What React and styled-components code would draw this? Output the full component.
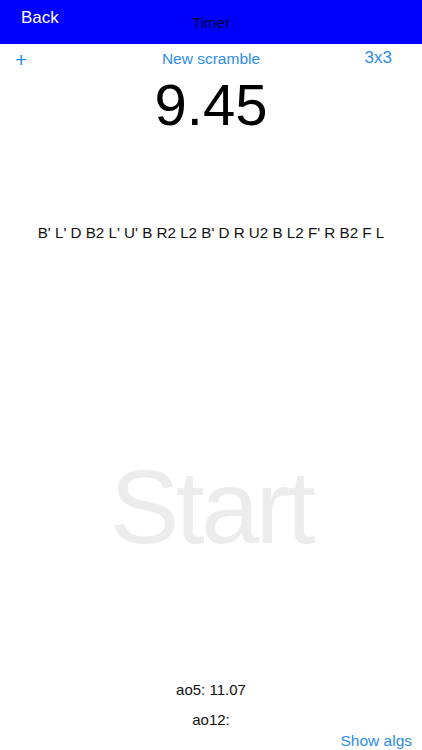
import styled, { createGlobalStyle } from "styled-components";

const GlobalStyle = createGlobalStyle`
  html, body {
    margin: 0;
    padding: 0;
    background: #ffffff;
  }
  body {
    font-family: "Liberation Sans", Arial, sans-serif;
  }
`;

const Screen = styled.div`
  width: 422px;
  height: 750px;
  display: flex;
  flex-direction: column;
  overflow: hidden;
  background: #ffffff;
`;

const NavBar = styled.div`
  height: 44px;
  background-color: #0000ff;
  display: grid;
  grid-template-columns: 1fr auto 1fr;
  align-items: center;
`;

const BackButton = styled.div`
  color: #ffffff;
  font-size: 17px;
  padding-left: 21px;
  margin-top: -8px;
`;

const NavTitle = styled.div`
  color: #000033;
  font-size: 15px;
`;

const ToolRow = styled.div`
  display: grid;
  grid-template-columns: 1fr auto 1fr;
  align-items: center;
  height: 30px;
`;

const LinkText = styled.div`
  color: #2d8ce8;
  font-size: ${(p) => p.size || 15}px;
  text-align: ${(p) => p.align || "center"};
  padding: ${(p) => p.pad || "0"};
  margin-top: ${(p) => p.shift || 0}px;
`;

const Time = styled.div`
  text-align: center;
  font-size: 58px;
  color: #000000;
  line-height: 58px;
  margin-top: 2px;
`;

const Scramble = styled.div`
  text-align: center;
  font-size: 15.2px;
  color: #111111;
  margin-top: 90px;
`;

const StartArea = styled.div`
  flex: 1;
  display: flex;
  align-items: center;
  justify-content: center;
  padding-top: 92px;
`;

const StartLabel = styled.div`
  font-size: 104px;
  color: #ececec;
  letter-spacing: -3.5px;
`;

const Stats = styled.div`
  display: flex;
  flex-direction: column;
  align-items: center;
  gap: 13px;
  font-size: 15px;
  color: #111111;
`;

const Footer = styled.div`
  display: flex;
  justify-content: flex-end;
  padding: 4px 10px 0 0;
`;

export default function App() {
  return (
    <>
      <GlobalStyle />
      <Screen>
        <NavBar>
          <BackButton>Back</BackButton>
          <NavTitle>Timer</NavTitle>
          <div />
        </NavBar>
        <ToolRow>
          <LinkText size={21} align="left" pad="0 0 0 15px" shift={2}>+</LinkText>
          <LinkText size={15.5}>New scramble</LinkText>
          <LinkText size={17} align="right" pad="0 30px 0 0" shift={-3}>3x3</LinkText>
        </ToolRow>
        <Time>9.45</Time>
        <Scramble>B' L' D B2 L' U' B R2 L2 B' D R U2 B L2 F' R B2 F L</Scramble>
        <StartArea>
          <StartLabel>Start</StartLabel>
        </StartArea>
        <Stats>
          <div>ao5: 11.07</div>
          <div>ao12:</div>
        </Stats>
        <Footer>
          <LinkText size={15.5}>Show algs</LinkText>
        </Footer>
      </Screen>
    </>
  );
}
